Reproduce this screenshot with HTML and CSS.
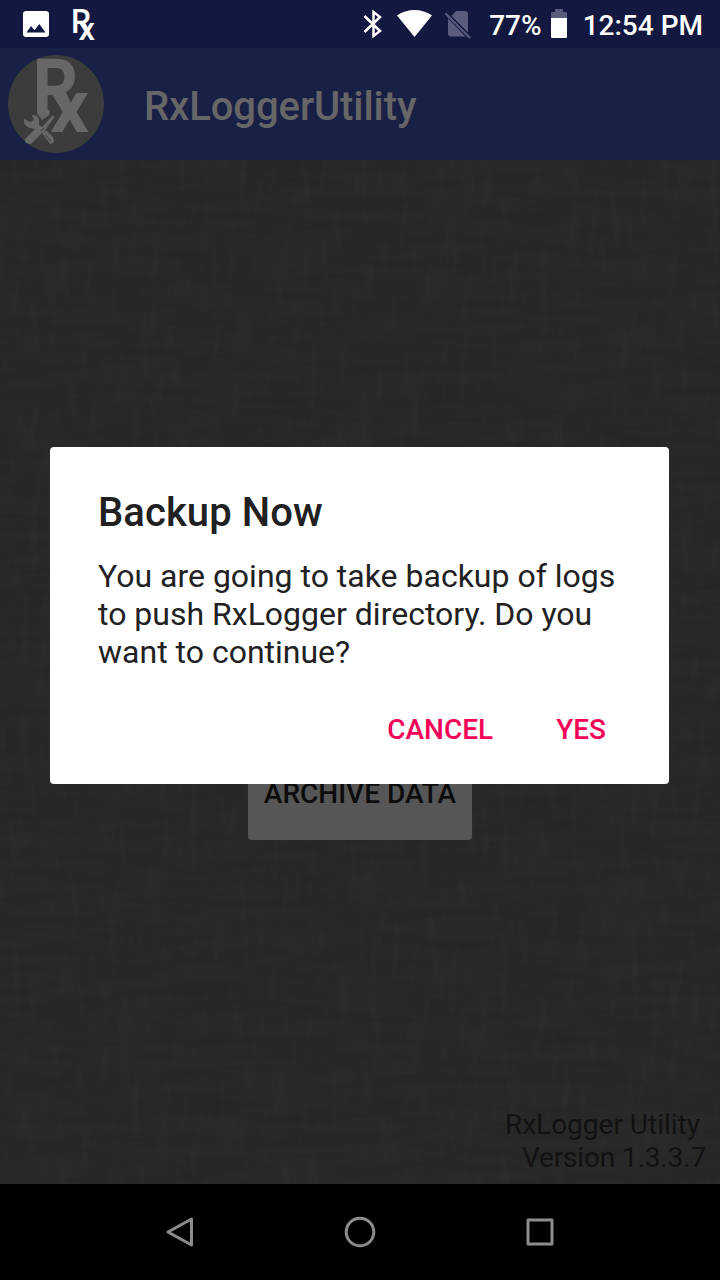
FILE: index.html
```html
<!DOCTYPE html>
<html lang="en">
<head>
<meta charset="utf-8">
<title>RxLoggerUtility</title>
<link rel="stylesheet" href="styles.css">
</head>
<body>
<div class="screen">
  <header class="status">
    <svg class="status-left" width="104" height="48" viewBox="0 0 104 48">
      <path fill="#fff" fill-rule="evenodd" d="M26 11h20q3 0 3 3v20q0 3-3 3H26q-3 0-3-3V14q0-3 3-3zM26.500 32.500h19l-6.200-8.500-4.800 6.300-3.400-4.200z"/>
      <g class="rx small">
        <text x="71" y="33" font-size="34" textLength="20" lengthAdjust="spacingAndGlyphs">R</text>
        <text x="78.500" y="39.500" font-size="32" textLength="16.500" lengthAdjust="spacingAndGlyphs">x</text>
      </g>
    </svg>
    <div class="status-right">
      <svg class="radios" width="112" height="48" viewBox="360 0 112 48">
        <path fill="none" stroke="#fff" stroke-width="2.500" stroke-linejoin="miter" d="M364.500 16l15.500 15-6.500 5V12l6.500 5-15.500 15"/>
        <path fill="#fff" d="M414.500 37L397 15.500Q405 10 414.500 10T432 15.500z"/>
        <path fill="#595c7d" d="M456 11h9q3 0 3 3v18.500L451.500 16zM448 18.500L465.500 36.500H451q-3 0-3-3z"/>
        <path stroke="#595c7d" stroke-width="2.200" d="M445.500 13.500L470 38"/>
      </svg>
      <span class="percent">77%</span>
      <svg class="battery" width="16" height="48" viewBox="0 0 16 48">
        <path fill="#595c7d" d="M4 9h8v3h3q1 0 1 1v5H0v-5q0-1 1-1h3z"/>
        <path fill="#fff" d="M0 18h16v19q0 1-1 1H1q-1 0-1-1z"/>
      </svg>
      <span class="clock">12:54 PM</span>
    </div>
  </header>

  <div class="appbar">
    <svg class="logo" width="96" height="98" viewBox="8 55 96 98">
      <rect x="8" y="55" width="96" height="98" rx="48" ry="49" fill="#3c3c3c"/>
      <g class="rx large">
        <text x="32.500" y="117" font-size="81" textLength="46" lengthAdjust="spacingAndGlyphs">R</text>
        <text x="50" y="132" font-size="74" textLength="39" lengthAdjust="spacingAndGlyphs">x</text>
      </g>
      <path fill="#3c3c3c" d="M34 114H50L60 110 54 124 47 131 38 124z"/>
      <path fill="#676767" d="M37.500 110H49.500V115L42 120 37.500 114z"/>
      <path fill="#676767" d="M25 139L35 129 30 128Q23 126 24 119L30 122 34 120 32 115Q38 115 39 120V125L42 127 53 115 54.500 117 46 129 35 140 31 144Q24 144 25 139zM42 133L46 130 53 137Q56 143 50 144z"/>
      <path stroke="#3c3c3c" d="M45 135l6 6M41 131l3-3"/>
    </svg>
    <h1 class="app-title">RxLoggerUtility</h1>
  </div>

  <main class="content">
    <svg class="weave" width="720" height="1024">
      <filter id="across" x="0" y="0" width="100%" height="100%">
        <feTurbulence type="fractalNoise" baseFrequency="0.012 0.08" numOctaves="3" seed="4"/>
        <feColorMatrix values="0 0 0 0 0  0 0 0 0 0  0 0 0 0 0  1.200 0 0 0 -.48"/>
      </filter>
      <filter id="down" x="0" y="0" width="100%" height="100%">
        <feTurbulence type="fractalNoise" baseFrequency="0.1 0.02" numOctaves="3" seed="9"/>
        <feColorMatrix values="0 0 0 0 1  0 0 0 0 1  0 0 0 0 1  .25 0 0 0 -.11"/>
      </filter>
      <rect width="720" height="1024" filter="url(#across)" opacity=".14"/>
      <rect width="720" height="1024" filter="url(#down)" opacity=".14"/>
    </svg>
    <button class="archive">ARCHIVE DATA</button>
    <footer class="version"><span class="product">RxLogger Utility</span><span class="number">Version 1.3.3.7</span></footer>
  </main>

  <nav class="navbar">
    <svg width="32" height="34" viewBox="0 0 32 34"><path d="M27.500 4v26L4 17z"/></svg>
    <svg width="32" height="34" viewBox="0 0 32 34"><circle cx="16" cy="17" r="13.800"/></svg>
    <svg width="32" height="34" viewBox="0 0 32 34"><rect x="4" y="5" width="24" height="24"/></svg>
  </nav>

  <section class="dialog" role="dialog">
    <h2 class="dialog-title">Backup Now</h2>
    <p class="message">You are going to take backup of logs<br>to push RxLogger directory. Do you<br>want to continue?</p>
    <div class="actions"><button class="action">CANCEL</button><button class="action">YES</button></div>
  </section>
</div>
</body>
</html>
```
FILE: styles.css
```css
* { box-sizing: border-box; }
body { margin: 0; background: #000; font-family: Roboto, sans-serif; }
svg { display: block; flex: none; overflow: visible; }
button { border: 0; padding: 0; background: none; font: inherit; }
h1, h2, p { margin: 0; font-weight: 500; }
.screen { position: relative; width: 720px; height: 1280px; display: flex; flex-direction: column; overflow: hidden; }
.status { height: 48px; background: #131840; color: #fff; display: flex; justify-content: space-between; }
.status-right { display: flex; padding-right: 17px; font-size: 28px; font-weight: 500; line-height: 51px; white-space: nowrap; }
.percent { margin-left: 17px; }
.battery { margin-left: 9px; }
.clock { margin-left: 16px; }
.rx { font-family: Roboto, sans-serif; }
.rx.small { fill: #fff; font-weight: 500; }
.rx.large { fill: #676767; font-weight: 700; }
.appbar { height: 112px; background: #192046; display: flex; align-items: center; padding-left: 8px; }
.app-title { margin: 6px 0 0 40px; font-size: 40px; line-height: 48px; letter-spacing: -.07px; color: #666; }
.content { position: relative; height: 1024px; background: #292929; display: flex; flex-direction: column; align-items: center; justify-content: space-between; padding-top: 584px; }
.weave { position: absolute; inset: 0; }
.archive { position: relative; width: 224px; height: 96px; border-radius: 4px; background: #565656; color: #0c0c0c; font-size: 28px; font-weight: 500; line-height: 92px; white-space: nowrap; padding-top: 4px; }
.version { position: relative; align-self: flex-end; display: flex; flex-direction: column; align-items: flex-end; padding: 0 14px 10px 0; font-size: 28px; line-height: 33px; color: #121212; }
.product { margin-right: 6px; }
.number { letter-spacing: -.15px; }
.navbar { height: 96px; background: #000; display: flex; justify-content: center; align-items: center; gap: 148px; }
.navbar svg { fill: none; stroke: #8c8c8c; stroke-width: 3; stroke-linejoin: round; }
.dialog { position: absolute; left: 50px; top: 447px; width: 619px; height: 337px; padding: 42px 48px 0; border-radius: 4px; background: #fff; color: #212121; }
.dialog-title { font-size: 40px; line-height: 48px; letter-spacing: .08px; white-space: nowrap; }
.message { margin-top: 20px; font-size: 32px; font-weight: 400; line-height: 38px; white-space: nowrap; }
.actions { display: flex; justify-content: flex-end; gap: 63px; margin-top: 42px; padding-right: 15px; }
.action { color: #f50057; font-size: 28px; font-weight: 500; line-height: 33px; }
```
